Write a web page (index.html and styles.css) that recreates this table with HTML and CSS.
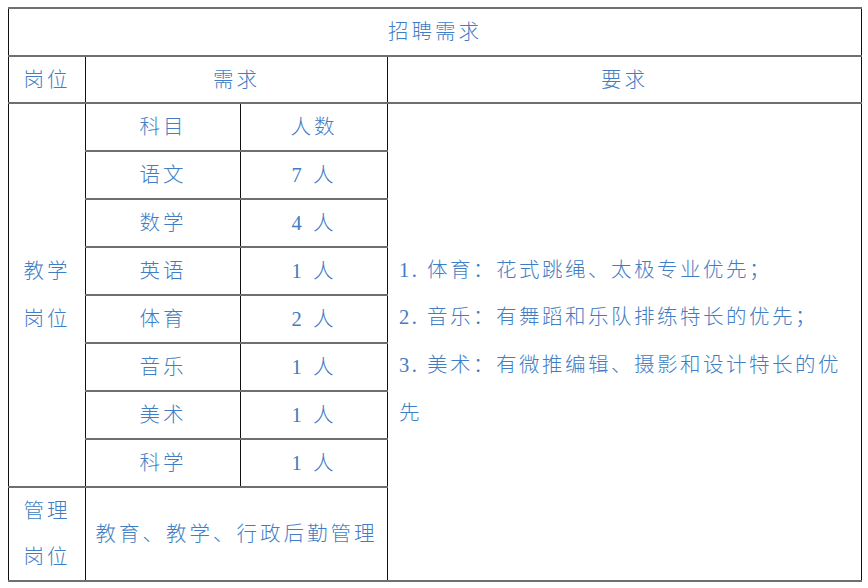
FILE: index.html
```html
<!DOCTYPE html>
<html lang="zh-CN">
<head>
<meta charset="utf-8">
<title>招聘需求</title>
<link rel="stylesheet" href="styles.css">
</head>
<body>
<table class="recruit">
  <colgroup>
    <col class="c1"><col class="c2"><col class="c3"><col class="c4">
  </colgroup>
  <tr class="r-head">
    <td colspan="4">招聘需求</td>
  </tr>
  <tr class="r-head2">
    <td>岗位</td>
    <td colspan="2">需求</td>
    <td>要求</td>
  </tr>
  <tr class="r-sub">
    <td rowspan="8" class="post">教学<br>岗位</td>
    <td>科目</td>
    <td>人数</td>
    <td rowspan="9" class="req">
      <p>1. 体育：花式跳绳、太极专业优先；</p>
      <p>2. 音乐：有舞蹈和乐队排练特长的优先；</p>
      <p>3. 美术：有微推编辑、摄影和设计特长的优先</p>
    </td>
  </tr>
  <tr class="r-sub"><td>语文</td><td>7 人</td></tr>
  <tr class="r-sub"><td>数学</td><td>4 人</td></tr>
  <tr class="r-sub"><td>英语</td><td>1 人</td></tr>
  <tr class="r-sub"><td>体育</td><td>2 人</td></tr>
  <tr class="r-sub"><td>音乐</td><td>1 人</td></tr>
  <tr class="r-sub"><td>美术</td><td>1 人</td></tr>
  <tr class="r-sub"><td>科学</td><td>1 人</td></tr>
  <tr class="r-last">
    <td class="post post2">管理<br>岗位</td>
    <td colspan="2">教育、教学、行政后勤管理</td>
  </tr>
</table>
</body>
</html>
```
FILE: styles.css
```css
html, body {
  background: #ffffff;
}
body {
  margin: 7px 0 0 8px;
}
.recruit {
  border-collapse: collapse;
  table-layout: fixed;
  width: 853px;
  font-family: "Liberation Serif", "Noto Sans CJK SC", serif;
  font-weight: 300;
  font-size: 20.5px;
  letter-spacing: 3px;
  color: #3f7dc4;
}
.c1 { width: 77px; }
.c2 { width: 155px; }
.c3 { width: 147px; }
.c4 { width: 474px; }
.recruit td {
  border-top: 2px solid #6f6f6f;
  border-bottom: 2px solid #6f6f6f;
  border-left: 1px solid #111111;
  border-right: 1px solid #111111;
  text-align: center;
  vertical-align: middle;
  padding: 0;
  line-height: 28px;
}
.r-head { height: 48px; }
.r-head2 { height: 47px; }
.r-sub { height: 48px; }
.r-last { height: 93px; }
.post {
  line-height: 48px !important;
}
.post2 {
  line-height: 46px !important;
}
.req {
  text-align: justify !important;
  padding: 0 20px 0 11px !important;
  line-height: 47.7px !important;
  letter-spacing: 2.5px;
}
.req p {
  margin: 0;
}
```
